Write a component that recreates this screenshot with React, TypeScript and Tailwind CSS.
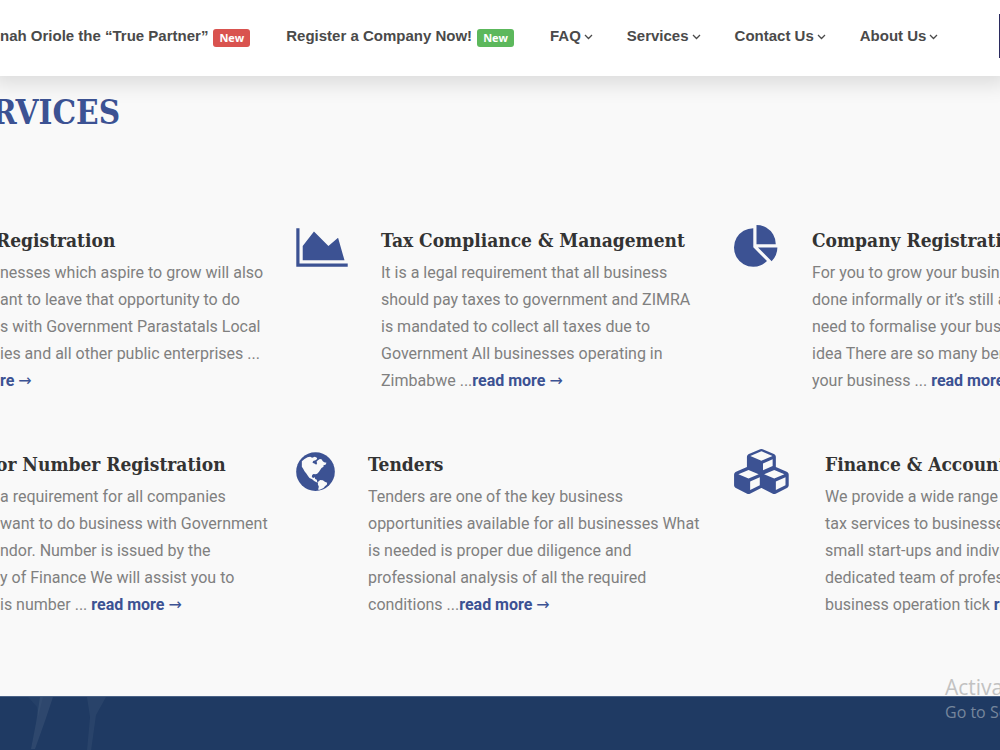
import type { ReactNode } from "react";
import clsx from "clsx";

type IconProps = { className?: string };

function AreaChartIcon({ className }: IconProps) {
  return (
    <svg viewBox="0 0 2048 1792" className={className} fill="currentColor" aria-hidden="true">
      <path d="M2048 1536v128h-2048v-1536h128v1408h1920zM1664 512l256 896h-1664v-576l448-576 576 576z" />
    </svg>
  );
}

function PieChartIcon({ className }: IconProps) {
  return (
    <svg viewBox="0 0 1792 1792" className={className} fill="currentColor" aria-hidden="true">
      <path d="M768 890l546 546q-106 108-247.5 168t-298.5 60q-209 0-385.5-103t-279.5-279.5-103-385.5 103-385.5 279.5-279.5 385.5-103v762zM955 896h773q0 157-60 298.5t-168 247.5zM1664 768h-768v-768q209 0 385.5 103t279.5 279.5 103 385.5z" />
    </svg>
  );
}

function GlobeIcon({ className }: IconProps) {
  return (
    <svg viewBox="0 0 116 135" className={className} aria-hidden="true">
      <circle cx="58" cy="68" r="58" fill="currentColor" />
      <path
        fill="#f9f9f9"
        d="M17 37l8-7 9-5 8-2 6 3 8-3 6 3 1 4-5 4-7 2-2 5 7 3 4 3 3-4-2-5 4-4 6-4 5 1 4 6 4 3 7 1-3 6-6 2 0 4-6 4-4 6-4 6-5 5-5 2-6-1-4 3-1 6 4 3 5-2 1 5 5 2 1 6 4 3-6-1-7-4-6-5-8-4-4-5-5-8-6-7-4-8-4-6 0-8z"
      />
      <path fill="#f9f9f9" d="M66 98l6-5 8 1 6 4 7 3-1 6-5 4-5 6-8 4-6 2-2-2 2-8-3-7z" />
    </svg>
  );
}

function CubesIcon({ className }: IconProps) {
  return (
    <svg viewBox="0 0 2304 1792" className={className} fill="currentColor" aria-hidden="true">
      <path d="M640 1632l384-192v-314l-384 164v342zM576 1178l404-173-404-173-404 173zM1664 1632l384-192v-314l-384 164v342zM1600 1178l404-173-404-173-404 173zM1152 843l384-165v-266l-384 164v267zM1088 464l441-189-441-189-441 189zM2176 1024v416q0 36-19 67t-52 47l-448 224q-25 14-57 14t-57-14l-448-224q-4-2-7-4-2 2-7 4l-448 224q-25 14-57 14t-57-14l-448-224q-33-16-52-47t-19-67v-416q0-38 21.5-70t56.5-48l434-186v-400q0-38 21.5-70t56.5-48l448-192q23-10 50-10t50 10l448 192q35 16 56.5 48t21.5 70v400l434 186q36 16 57 48t21 70z" />
    </svg>
  );
}

function ChevronIcon() {
  return (
    <svg viewBox="0 0 9 6" className="w-[9px] h-[6px]" fill="none" stroke="currentColor" strokeWidth="1.3" aria-hidden="true">
      <path d="M1 1l3.5 3.5L8 1" />
    </svg>
  );
}

const featuredLinks = [
  { label: "nah Oriole the “True Partner”", color: "red" },
  { label: "Register a Company Now!", color: "green" },
];

const menuLinks = ["FAQ", "Services", "Contact Us", "About Us"];

type Service = {
  title: string;
  lines: string[];
  last: string;
  link: string;
  icon?: ReactNode;
};

const services: Service[] = [
  {
    title: "Registration",
    lines: [
      "nesses which aspire to grow will also",
      "ant to leave that opportunity to do",
      "s with Government Parastatals Local",
      "ies and all other public enterprises ...",
    ],
    last: "",
    link: "re",
  },
  {
    title: "Tax Compliance & Management",
    lines: [
      "It is a legal requirement that all business",
      "should pay taxes to government and ZIMRA",
      "is mandated to collect all taxes due to",
      "Government All businesses operating in",
    ],
    last: "Zimbabwe ...",
    link: "read more",
    icon: <AreaChartIcon className="w-[52px] h-[45px]" />,
  },
  {
    title: "Company Registration",
    lines: [
      "For you to grow your business",
      "done informally or it’s still an",
      "need to formalise your business",
      "idea There are so many benefits",
    ],
    last: "your business ... ",
    link: "read more",
    icon: <PieChartIcon className="w-[45px] h-[45px]" />,
  },
  {
    title: "or Number Registration",
    lines: [
      "a requirement for all companies",
      "want to do business with Government",
      "ndor. Number is issued by the",
      "y of Finance We will assist you to",
    ],
    last: "is number ... ",
    link: "read more",
  },
  {
    title: "Tenders",
    lines: [
      "Tenders are one of the key business",
      "opportunities available for all businesses What",
      "is needed is proper due diligence and",
      "professional analysis of all the required",
    ],
    last: "conditions ...",
    link: "read more",
    icon: <GlobeIcon className="w-[39px] h-[45px]" />,
  },
  {
    title: "Finance & Accounting",
    lines: [
      "We provide a wide range of",
      "tax services to businesses",
      "small start-ups and individuals",
      "dedicated team of professionals",
    ],
    last: "business operation tick ",
    link: "read more",
    icon: <CubesIcon className="w-[58px] h-[45px]" />,
  },
];

function Header() {
  return (
    <header className="relative z-10 flex h-[76px] items-center justify-between bg-white shadow-[0_0_20px_8px_rgba(0,0,0,0.12)]">
      <nav className="flex items-center gap-9 whitespace-nowrap pb-[3px] font-['Liberation_Sans',Arial,sans-serif] text-[15px] font-bold text-[#4a4a4a]">
        {featuredLinks.map((item) => (
          <a key={item.label} href="#" className="flex items-center gap-[5px]">
            {item.label}
            <span
              className={clsx(
                "mt-[3px] rounded-[3px] px-[6px] font-['Open_Sans',sans-serif] text-[11px] leading-[18px] text-white",
                item.color === "red" ? "bg-[#d9534f]" : "bg-[#5cb85c]"
              )}
            >
              New
            </span>
          </a>
        ))}
        <div className="flex items-center gap-[34px]">
          {menuLinks.map((label) => (
            <a key={label} href="#" className="flex items-center gap-[3px]">
              {label}
              <ChevronIcon />
            </a>
          ))}
        </div>
      </nav>
      <button type="button" aria-label="Open menu" className="mb-1 h-[44px] w-px bg-[#2b2b5e]" />
    </header>
  );
}

function ServiceCard({ service }: { service: Service }) {
  return (
    <article className="flex items-start gap-[33px] whitespace-nowrap">
      {service.icon && <div className="shrink-0 text-[#3c5293]">{service.icon}</div>}
      <div>
        <h3
          className={clsx(
            "font-['Roboto_Slab','DejaVu_Serif_Condensed','DejaVu_Serif',serif] text-[19px] leading-[30px] font-bold text-[#333]",
            !service.icon && "-ml-1"
          )}
        >
          {service.title}
        </h3>
        <p className="mt-1 font-[Roboto,sans-serif] text-[16px] leading-[27px] text-[#808080]">
          {service.lines.map((line) => (
            <span key={line} className="block">
              {line}
            </span>
          ))}
          {service.last}
          <a href="#" className="font-bold text-[#3c5293]">
            {service.link} <span className="font-['DejaVu_Sans',sans-serif] leading-none font-normal">→</span>
          </a>
        </p>
      </div>
    </article>
  );
}

export default function App() {
  return (
    <div className="relative flex min-h-screen flex-col overflow-hidden bg-[#f9f9f9]">
      <Header />
      <main className="pb-[78px]">
        <h2 className="-ml-2 pt-[13px] font-['Roboto_Slab','DejaVu_Serif_Condensed','DejaVu_Serif',serif] text-[33px] leading-[48px] font-semibold text-[#3c5293]">
          RVICES
        </h2>
        <div className="mt-[88px] grid grid-cols-[minmax(0,296fr)_minmax(0,438fr)_minmax(0,266fr)] gap-y-[55px]">
          {services.map((service) => (
            <ServiceCard key={service.title} service={service} />
          ))}
        </div>
      </main>
      <footer className="flex-1 border-t border-[#4a6286] bg-[#1f3a63]">
        <svg viewBox="0 0 120 54" className="h-[54px] w-[120px]" fill="#8fa6b5" aria-hidden="true">
          <path opacity="0.13" d="M40 0h13l-8 24-10 28-4 0 5-26z" />
          <path opacity="0.06" d="M28 0l9 10 1 10 5-20z" />
          <path opacity="0.09" d="M87 0h19l-10 18-5 36h-4l3-34z" />
        </svg>
      </footer>
      <div className="absolute bottom-[27px] left-[945px] z-20 whitespace-nowrap font-['Open_Sans',sans-serif]">
        <p className="text-[21px] leading-[26px] text-[#c2c2c2]">Activate Windows</p>
        <p className="text-[16px] leading-[24px] text-[#76869c]">Go to Settings to activate Windows.</p>
      </div>
    </div>
  );
}
